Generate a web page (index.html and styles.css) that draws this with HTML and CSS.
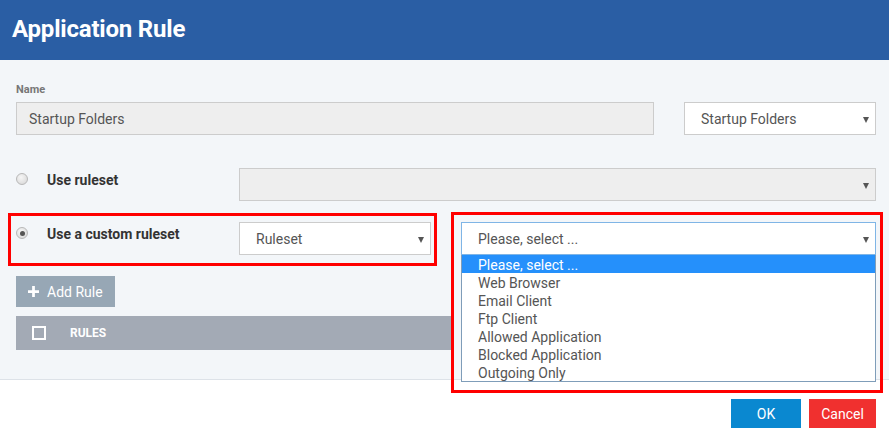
FILE: index.html
```html
<!DOCTYPE html>
<html>
<head>
<meta charset="utf-8">
<link rel="stylesheet" href="styles.css">
</head>
<body>
<div class="dialog">
  <header class="header"><h1 class="title">Application Rule</h1></header>
  <main class="content">
    <div class="field-label">Name</div>
    <div class="name-row">
      <div class="input">Startup Folders</div>
      <div class="select">Startup Folders<span class="caret"></span></div>
    </div>
    <div class="rule-row row-ruleset">
      <div class="opt"><span class="radio"></span><span class="opt-text">Use ruleset</span></div>
      <div class="select disabled"><span class="caret"></span></div>
    </div>
    <div class="rule-row row-custom">
      <div class="opt"><span class="radio checked"></span><span class="opt-text">Use a custom ruleset</span></div>
      <div class="select">Ruleset<span class="caret"></span></div>
      <div class="select focused">Please, select ...<span class="caret"></span></div>
    </div>
    <button class="add-btn"><svg class="plus" viewBox="0 0 12 12" width="11" height="11"><path d="M6 0v12M0 6h12" stroke="#fff" stroke-width="3"/></svg>Add Rule</button>
    <div class="rules-bar"><span class="checkbox"></span><span class="rules-title">RULES</span></div>

    <ul class="dropdown">
      <li class="active">Please, select ...</li>
      <li>Web Browser</li>
      <li>Email Client</li>
      <li>Ftp Client</li>
      <li>Allowed Application</li>
      <li>Blocked Application</li>
      <li>Outgoing Only</li>
    </ul>
    <div class="mark mark-left"></div>
  </main>
  <div class="mark mark-right"></div>
  <footer class="footer">
    <button class="btn ok">OK</button>
    <button class="btn cancel">Cancel</button>
  </footer>
</div>
</body>
</html>
```

FILE: styles.css
```css
* { box-sizing: border-box; }
html, body { margin: 0; padding: 0; background: #fff; }
body { font-family: Roboto, "Liberation Sans", Arial, sans-serif; color: #555; width: 889px; height: 443px; overflow: hidden; }
.dialog { position: relative; width: 889px; }
.header { height: 60px; background: #2a5ea4; display: flex; align-items: center; padding-left: 12px; }
.title { margin: 0; color: #fff; font-size: 24px; font-weight: 700; letter-spacing: -0.2px; margin-top: -2px; }

.content { position: relative; background: #f3f6f9; border-bottom: 1px solid #dde2e8; padding: 23px 13px 29px 16px; height: 320px; }
.field-label { font-size: 11px; font-weight: 700; color: #777; height: 19px; line-height: 14px; }
.name-row { display: grid; grid-template-columns: 638px 192px; column-gap: 30px; }
.input { height: 33px; background: #eee; border: 1px solid #ccc; font-size: 14px; color: #555; padding-left: 12px; padding-top: 1px; line-height: 31px; }
.select { position: relative; height: 33px; background: #fff; border: 1px solid #ccc; font-size: 14px; color: #555; padding-left: 16px; padding-top: 1px; line-height: 31px; }
.select.disabled { background: #eee; }
.select.focused { border-color: #7fb5e6; }
.caret { position: absolute; right: 6px; top: 14px; width: 0; height: 0; border-left: 3.5px solid transparent; border-right: 3.5px solid transparent; border-top: 6px solid #555; }

.rule-row { display: grid; grid-template-columns: 223px 1fr; align-items: start; }
.row-ruleset { margin-top: 33px; }
.row-custom { margin-top: 21px; grid-template-columns: 223px 192px 1fr; column-gap: 0; }
.row-custom .focused { margin-left: 30px; }
.opt { display: flex; align-items: center; height: 24px; }
.radio { flex: none; width: 12px; height: 12px; border-radius: 50%; border: 1px solid #b8b8b8; background: radial-gradient(circle at 40% 35%, #f6f6f6, #d4d4d4); margin-right: 19px; margin-top: -2px; position: relative; }
.radio.checked::after { content: ""; position: absolute; left: 2.5px; top: 2.5px; width: 5px; height: 5px; border-radius: 50%; background: #555; }
.opt-text { font-size: 14px; font-weight: 700; color: #333; }

.add-btn { display: flex; align-items: center; margin-top: 21px; width: 99px; height: 31px; background: #97a7b5; border: 0; color: #fff; font-family: inherit; font-size: 14px; padding: 0 0 0 12px; cursor: pointer; }
.plus { margin-right: 8px; }
.rules-bar { margin-top: 9px; width: 435px; height: 34px; background: #a3aab5; display: flex; align-items: center; padding-left: 16px; }
.checkbox { width: 14px; height: 14px; border: 2px solid #fff; margin-right: 24px; }
.rules-title { color: #fff; font-size: 12px; font-weight: 700; }

.dropdown { position: absolute; left: 461px; top: 195px; width: 415px; margin: 0; padding: 0; list-style: none; background: #fff; border: 1px solid #7f9db9; border-top: 0; z-index: 2; }
.dropdown li { height: 18px; line-height: 18px; font-size: 14px; color: #555; padding-left: 16px; padding-top: 1px; }
.dropdown li.active { background: #2590fb; color: #fff; }

.mark { position: absolute; border: 3px solid #f00; z-index: 3; }
.mark-left { left: 8px; top: 153px; width: 429px; height: 53px; }
.mark-right { left: 451px; top: 212px; width: 432px; height: 181px; background: transparent; }

.footer { display: flex; justify-content: flex-end; gap: 8px; padding: 19px 13px 0 0; }
.btn { height: 29px; border: 0; color: #fff; font-family: inherit; font-size: 14px; padding: 0; cursor: pointer; }
.ok { width: 70px; background: #0a88d0; }
.cancel { width: 67px; background: #f0302f; }
```
